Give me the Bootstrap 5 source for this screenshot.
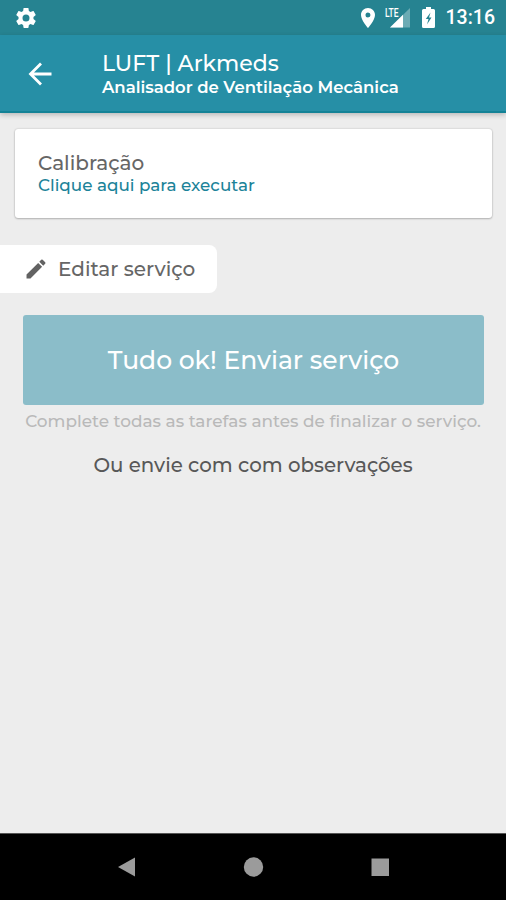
<!DOCTYPE html>
<html lang="pt-BR">
<head>
<meta charset="utf-8">
<meta name="viewport" content="width=device-width, initial-scale=1">
<title>LUFT | Arkmeds</title>
<link href="https://cdn.jsdelivr.net/npm/bootstrap@5.3.0/dist/css/bootstrap.min.css" rel="stylesheet">
<style>
body{background:#ededed;font-family:Montserrat,Inter,"Open Sans",sans-serif;color:#666}
svg{display:block;flex:none}
.app-screen{height:900px;overflow:hidden}
.status-strip{height:35px;background:#268391;flex:none;padding:0 11px 0 15px}
.status-clock{font:500 19.5px/36px Roboto,sans-serif;margin-left:11px}
.signal-icon{margin-left:8px}
.battery-icon{margin-left:11px}
.app-header{height:78px;background:#268fa6;border-bottom:2px solid #138296;box-shadow:0 2px 5px rgba(0,0,0,.22);flex:none;padding:2px 0 0 28px}
.app-title,.app-sub,.task-title,.task-link,.edit-label,.send-label,.hint-text,.alt-text{white-space:nowrap}
.app-titles{margin-left:49px}
.app-title{font-size:22px;line-height:25px;font-weight:500}
.app-sub{font-size:16.5px;line-height:22px;font-weight:600}
.task-card{margin:16px 14px 0 15px;height:89px;border:0;border-radius:3px;box-shadow:0 0 2px rgba(0,0,0,.22),0 1px 2px rgba(0,0,0,.2);padding:22px 23px 0}
.task-title{font-size:20px;line-height:24px;font-weight:500}
.task-link{font-size:16.8px;line-height:20px;color:#1c8399;font-weight:500}
.edit-tab{width:217px;height:48px;margin-top:27px;border-radius:0 8px 8px 0;padding-left:26px}
.edit-label{font-size:20px;margin-left:12px;font-weight:500}
.send-btn,.send-btn:disabled{margin:22px 22px 0 23px;height:90px;background:#8bbdc9;border:0;border-radius:3px;color:#fff;opacity:1;padding:2px 0 0}
.send-label{font-size:25px;font-weight:500}
.hint-text{font-size:16.9px;line-height:24px;color:#b9b9b9;margin-top:4px;font-weight:500}
.alt-text{font-size:19.8px;line-height:26px;margin-top:19px;color:#585858;font-weight:500}
.nav-keys{height:67px;background:#000;flex:none;border-top:1px solid #555}
</style>
</head>
<body>
<div class="app-screen d-flex flex-column">
<div class="status-strip d-flex align-items-center text-white">
<svg width="22" height="22" viewBox="1 1 22 22" fill="#fff"><path d="M19.430 12.980c.04-.32.07-.64.07-.98s-.03-.66-.07-.98l2.110-1.650c.19-.15.24-.42.12-.64l-2-3.460c-.12-.22-.39-.3-.61-.22l-2.490 1c-.52-.4-1.080-.73-1.690-.98l-.38-2.650C14.460 2.180 14.250 2 14 2h-4c-.25 0-.46.18-.49.42l-.38 2.650c-.61.25-1.170.59-1.690.98l-2.490-1c-.23-.09-.49 0-.61.22l-2 3.460c-.13.22-.07.49.12.64l2.110 1.650c-.04.32-.07.65-.07.98s.03.66.07.98l-2.110 1.650c-.19.15-.24.42-.12.64l2 3.460c.12.22.39.3.61.22l2.490-1c.52.4 1.080.73 1.690.98l.38 2.650c.03.24.24.42.49.42h4c.25 0 .46-.18.49-.42l.38-2.650c.61-.25 1.170-.59 1.690-.98l2.490 1c.23.09.49 0 .61-.22l2-3.460c.12-.22.07-.49-.12-.64l-2.110-1.650zM12 15.500a3.500 3.500 0 1 1 0-7 3.500 3.500 0 0 1 0 7z"/></svg>
<div class="ms-auto d-flex align-items-center">
<svg width="14" height="20" viewBox="5 2 14 20" fill="#fff"><path d="M12 2C8.130 2 5 5.130 5 9c0 5.250 7 13 7 13s7-7.750 7-13c0-3.870-3.130-7-7-7zm0 9.500a2.500 2.500 0 1 1 0-5 2.500 2.500 0 0 1 0 5z"/></svg>
<svg class="signal-icon" width="28" height="24" viewBox="0 0 28 24"><path d="M7 21.500 27 2v19.500z" fill="#fff" opacity=".32"/><path d="M7 21.500 20 8.800v12.700z" fill="#fff"/><path d="M0 0h17v11.500H0z" fill="#268391"/><text x="2" y="10.500" font-family="Roboto,sans-serif" font-weight="500" font-size="12" textLength="13.500" lengthAdjust="spacingAndGlyphs" fill="#fff">LTE</text></svg>
<svg class="battery-icon" width="13" height="21" viewBox="0 0 13 21"><path d="M4 0h5v2h2.500A1.500 1.500 0 0 1 13 3.500v16a1.500 1.500 0 0 1-1.500 1.500h-10A1.500 1.500 0 0 1 0 19.500v-16A1.500 1.500 0 0 1 1.500 2H4z" fill="#fff"/><path d="M8.500 5.500 3.800 12h2.700l-1.500 5.500L9.500 10.500H7z" fill="#268391"/></svg>
<span class="status-clock">13:16</span>
</div>
</div>
<header class="app-header d-flex align-items-center text-white">
<svg width="25" height="24" viewBox="0 0 25 24" fill="none" stroke="#fff" stroke-width="2.800"><path d="M13 1.500 2.500 12 13 22.500M2.500 12H23.500"/></svg>
<div class="app-titles"><div class="app-title">LUFT | Arkmeds</div><div class="app-sub">Analisador de Ventilação Mecânica</div></div>
</header>
<main class="flex-grow-1 d-flex flex-column">
<div class="card task-card bg-white"><div class="task-title">Calibração</div><div class="task-link">Clique aqui para executar</div></div>
<div class="edit-tab bg-white d-flex align-items-center">
<svg width="20" height="20" viewBox="2.500 2.500 19 19" fill="#626262"><path d="M3 17.250V21h3.750L17.810 9.940l-3.750-3.750L3 17.250zM20.710 7.040a1 1 0 0 0 0-1.410l-2.340-2.340a1 1 0 0 0-1.410 0l-1.830 1.830 3.750 3.750 1.830-1.830z"/></svg>
<span class="edit-label">Editar serviço</span></div>
<button class="btn send-btn" type="button" disabled><span class="send-label">Tudo ok! Enviar serviço</span></button>
<div class="hint-text text-center">Complete todas as tarefas antes de finalizar o serviço.</div>
<div class="alt-text text-center">Ou envie com com observações</div>
</main>
<nav class="nav-keys d-flex align-items-center justify-content-center">
<svg width="272" height="20" viewBox="0 0 272 20" fill="#9b9b9b"><path d="M1 10 18 .500v19z"/><circle cx="136.500" cy="10" r="9.700"/><path d="M254.500 1.500H272V19h-17.500z"/></svg>
</nav>
</div>
</body>
</html>
